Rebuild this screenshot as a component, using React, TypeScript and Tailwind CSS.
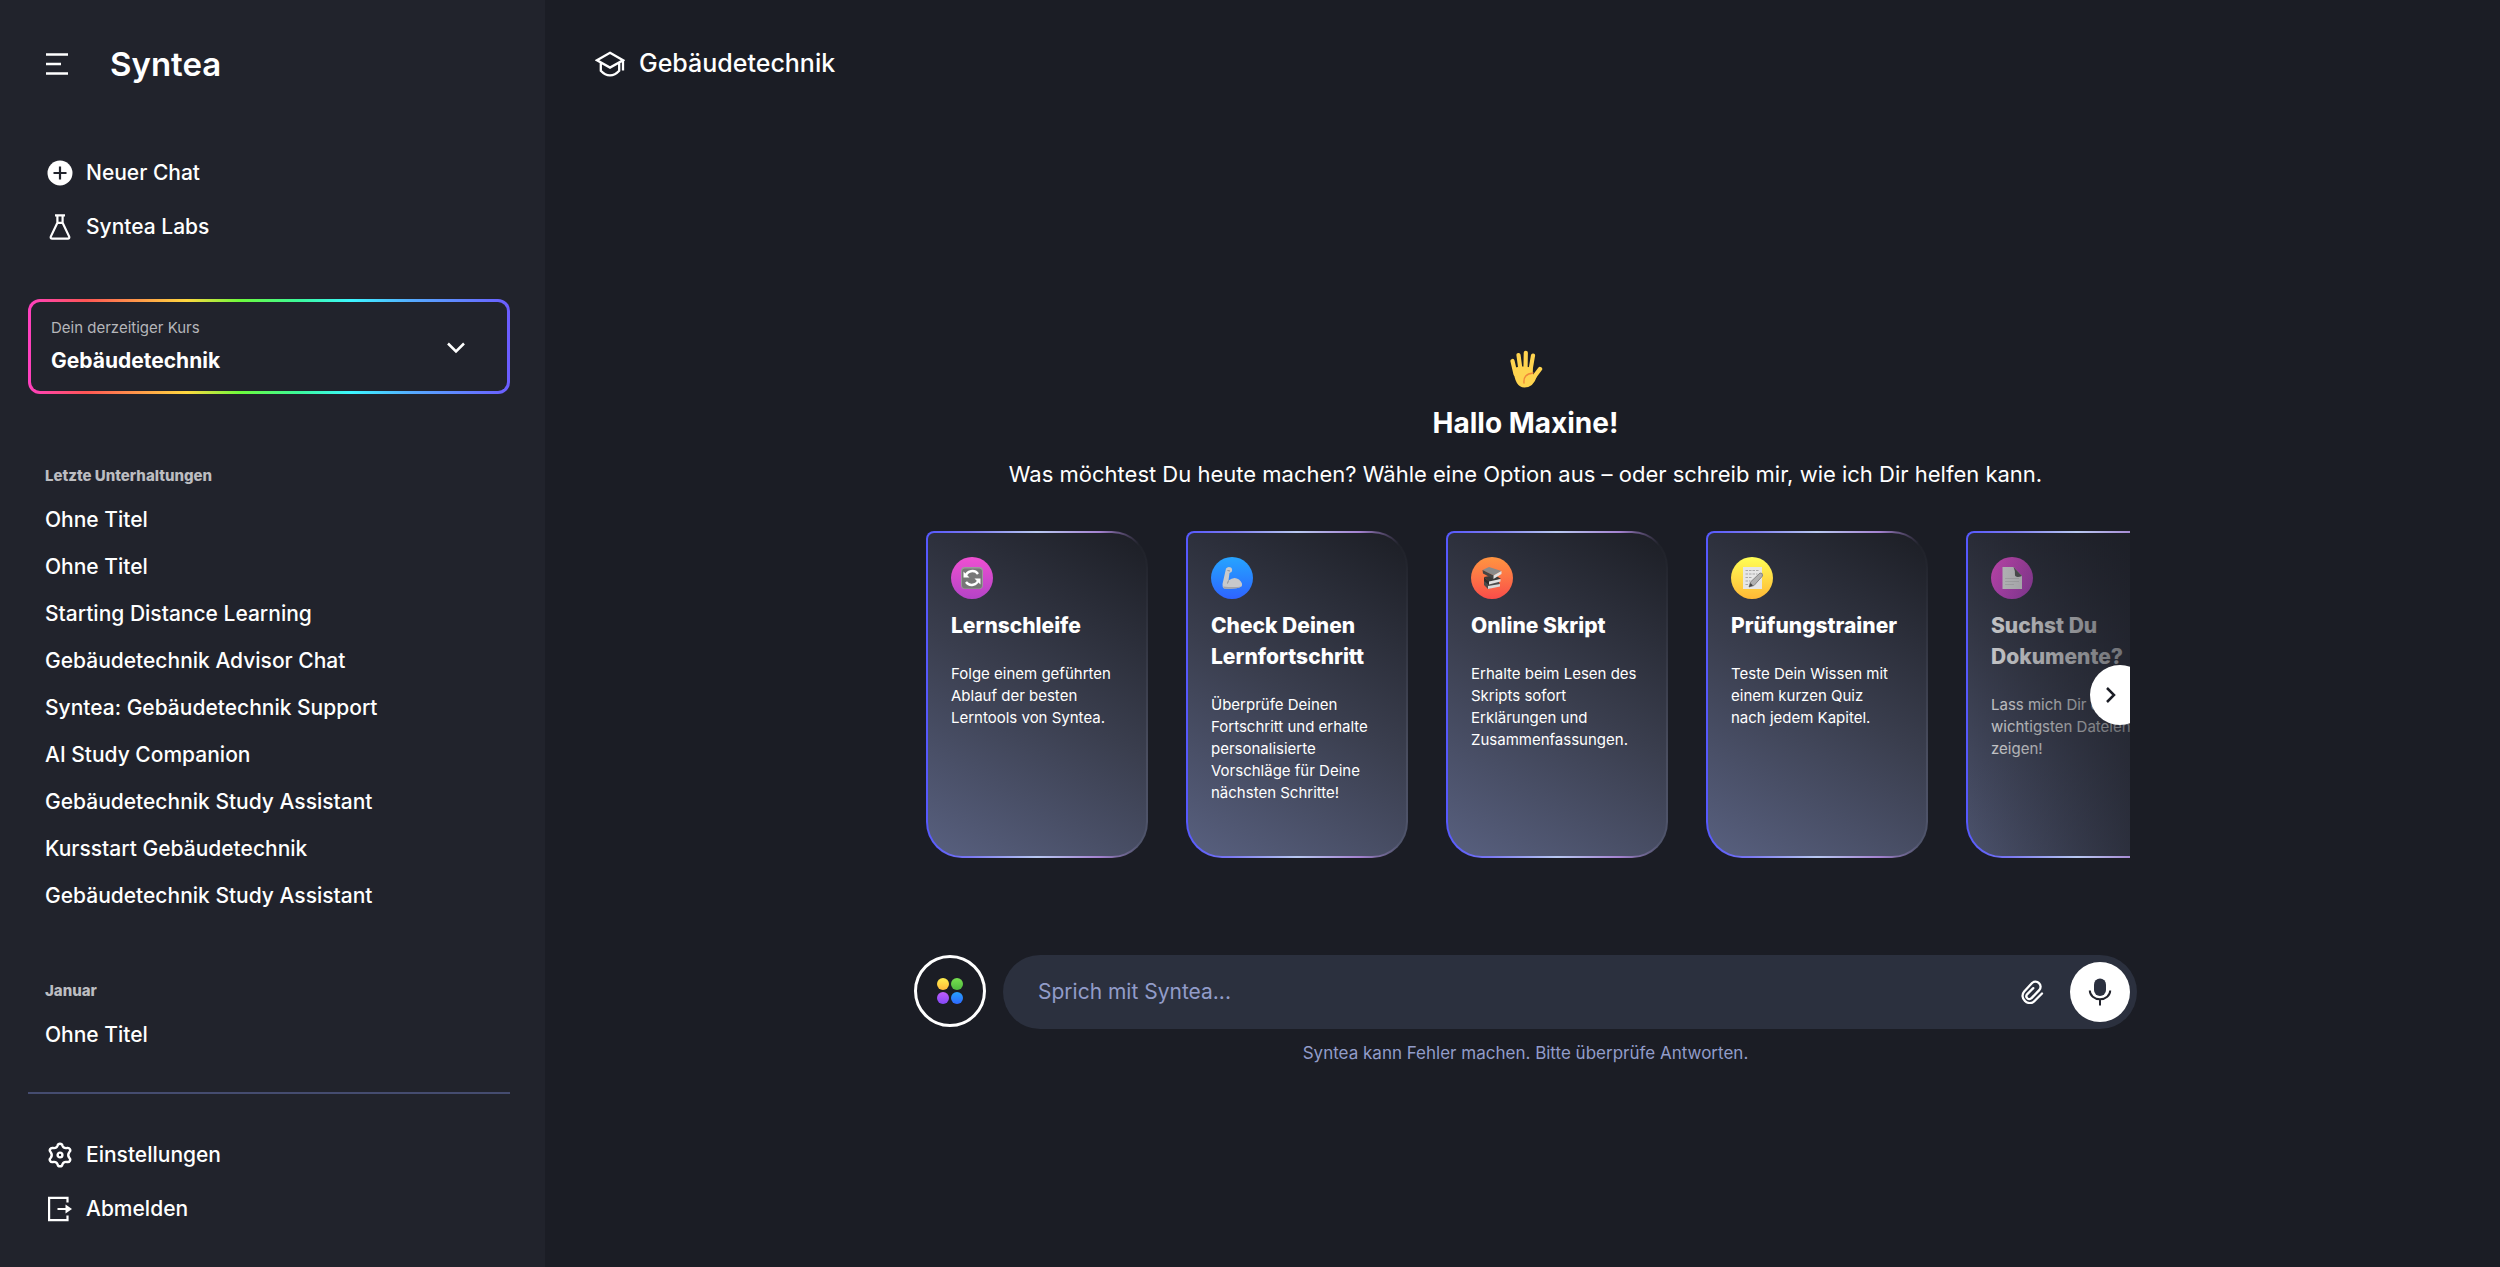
import { useState } from "react";
import type { ReactNode } from "react";

interface Action {
    title: string;
    text: string;
    badge: string;
    icon: ReactNode;
    faded?: boolean;
}

const recentChats = [
    "Ohne Titel",
    "Ohne Titel",
    "Starting Distance Learning",
    "Gebäudetechnik Advisor Chat",
    "Syntea: Gebäudetechnik Support",
    "AI Study Companion",
    "Gebäudetechnik Study Assistant",
    "Kursstart Gebäudetechnik",
    "Gebäudetechnik Study Assistant",
];

const januaryChats = ["Ohne Titel"];

const PlusIcon = () => (
    <svg viewBox="0 0 26 26" className="w-[26px] h-[26px]" fill="none">
        <circle cx="13" cy="13" r="12.5" fill="#fff" />
        <path d="M13 6.5v13M6.5 13h13" stroke="#21232c" strokeWidth="2.2" />
    </svg>
);

const FlaskIcon = () => (
    <svg viewBox="0 0 26 26" className="w-[26px] h-[26px]" fill="none" stroke="#fff" strokeWidth="2.2">
        <path d="M8 1.4h10M10.4 1.4v7.4L3.8 22.6q-.6 2 1.4 2h15.6q2 0 1.4-2L15.6 8.8V1.4M10 8.8h6" strokeLinejoin="round" />
    </svg>
);

const GearIcon = () => (
    <svg viewBox="0 0 26 26" className="w-[26px] h-[26px]" fill="none" stroke="#fff" strokeWidth="2.4" strokeLinejoin="round">
        <path d="M10.6 3.6Q11 1.7 13 1.7T15.4 3.6Q16.6 6.6 19.9 6Q21.9 5.5 22.9 7.2T22.3 10.1Q20.2 13 22.3 15.9Q23.8 17.2 22.9 18.8T19.9 20Q16.6 19.4 15.4 22.4Q15 24.3 13 24.3T10.6 22.4Q9.4 19.4 6.1 20Q4.1 20.5 3.1 18.8T3.7 15.9Q5.8 13 3.7 10.1Q2.2 8.8 3.1 7.2T6.1 6Q9.4 6.6 10.6 3.6Z" />
        <circle cx="13" cy="13" r="2.4" />
    </svg>
);

const LogoutIcon = () => (
    <svg viewBox="0 0 26 26" className="w-[26px] h-[26px]" fill="none" stroke="#fff" strokeWidth="2.2">
        <path d="M20.5 6.5V1.8H2.1v22.4h18.4v-4.7M10.5 13H20" />
        <path d="M18.5 8.5L25 13l-6.5 4.5z" fill="#fff" stroke="none" />
    </svg>
);

const CapIcon = () => (
    <svg viewBox="0 0 30 26" className="w-[30px] h-[26px]" fill="none" stroke="#fff" strokeWidth="2.3">
        <path d="M15 1.8L28 9.2L15 16.6L2 9.2ZM28 9v10.5M5.8 11.5v8.2Q10 24.3 15 24.3t9.2-4.6v-8.2" />
    </svg>
);

const HandIcon = () => (
    <svg viewBox="0 0 34 38" className="w-[34px] h-[38px]" fill="none" stroke="#ffd44f" strokeLinecap="round">
        <path d="M3.5 11L6.5 24M9.5 5L11.5 20M16.8 2.8L16.5 20M24 5.5L21.5 20" strokeWidth="4.2" />
        <path d="M31 19L25 27" strokeWidth="4.4" />
        <path d="M4.4 18Q13 15 23.6 18L24 24.5L28 26Q24.5 37.5 15.5 37.5Q5.5 37.5 4.4 18Z" fill="#ffd44f" stroke="none" />
        <path d="M24 23Q14 24 15 33" stroke="#f0893a" strokeWidth="1.4" />
    </svg>
);

const LoopIcon = () => (
    <svg viewBox="0 0 24 24" className="w-6 h-6" fill="none">
        <rect x="1" y="1" width="22" height="22" rx="4" fill="#9a9a9a" />
        <rect x="2" y="2.5" width="20" height="20" rx="3" fill="#777" />
        <path d="M5.5 10.5a7 7 0 0 1 12.5-2.5M18.5 13.5a7 7 0 0 1-12.5 2.5" stroke="#fff" strokeWidth="2.4" />
        <path d="M3.5 5.5v6h6zM20.5 18.5v-6h-6z" fill="#fff" />
    </svg>
);

const ArmIcon = () => (
    <svg viewBox="0 0 24 24" className="w-6 h-6" fill="none">
        <path d="M6 2.5Q8 0 11 1.5Q13 3.5 11.5 6L9.5 7L8.5 14.5Q14 10 19 13.5Q23.5 17.5 21.5 20.5Q16 23.5 4 22.5Q2.2 21.5 2.5 18Z" fill="#c9c9cb" />
        <path d="M8.5 14.5L7.5 17.5M7.5 4.5l2.5.5" stroke="#8e8e92" />
        <path d="M4 22.5Q16 23.5 21.5 20.5Q14 21.5 3 20.5Z" fill="#a4a4a8" />
    </svg>
);

const BooksIcon = () => (
    <svg viewBox="0 0 24 24" className="w-6 h-6" fill="none">
        <path d="M4 15l14-2 2 6-12 4L4 19z" fill="#4a4a4a" />
        <path d="M8 20l12-2v2.5L8 23z" fill="#d8d8d8" />
        <path d="M4 11l11-2 6 4-12 2.5z" fill="#393939" />
        <path d="M4 11l5 4.5v3.5l-5-4z" fill="#2c2c2c" />
        <path d="M9 15.5l11.5-2.5v2.5L9 18.5z" fill="#e0e0e0" />
        <path d="M2.5 4L9 1l12.5 4-8 4.5z" fill="#8a8a8a" />
        <path d="M2.5 4l11 5.5v3.5L3 7.5z" fill="#444" />
        <path d="M13.5 9.5l8-4.5v3l-8 5z" fill="#e2e2e2" />
    </svg>
);

const MemoIcon = () => (
    <svg viewBox="0 0 24 24" className="w-6 h-6" fill="none">
        <path d="M3 1h19v22H3z" fill="#e6e6e6" />
        <path d="M5.5 4.5h14M5.5 8h12M5.5 11.5h7M5.5 15h5M5.5 18.5h3" stroke="#a9a9a9" strokeDasharray="2.5 1" />
        <path d="M9 21l1.5-5L20 7q3-.5 2.5 3L14 19.5z" fill="#b0b0b0" stroke="#858585" />
        <path d="M9 21l1.5-4 2.5 2.5z" fill="#444" />
    </svg>
);

const PageIcon = () => (
    <svg viewBox="0 0 24 24" className="w-6 h-6" fill="none">
        <path d="M2.5 1h11L22 10v13H2.5z" fill="#ededed" />
        <path d="M13.5 1L22 10q-6 2-7-.5Q15.5 5 13.5 1z" fill="#5c5c5c" />
        <path d="M5 12.5h14M5 15.5h14M5 18.5h9" stroke="#d6d6d6" />
    </svg>
);

const ClipIcon = () => (
    <svg viewBox="0 0 24 24" className="w-6 h-6" fill="none" stroke="#fff" strokeWidth="2.3" strokeLinecap="round">
        <path d="M22 13.5l-7.2 7.2a6.6 6.6 0 0 1-9.8.3a6.6 6.6 0 0 1-.8-9.5l7.6-8.2a4.9 4.9 0 0 1 7.2-.2a4.9 4.9 0 0 1 .2 7l-7.7 8a2.9 2.9 0 0 1-4.2.1a2.9 2.9 0 0 1 0-4.1l6-6" />
    </svg>
);

const MicIcon = () => (
    <svg viewBox="0 0 24 28" className="w-6 h-7" fill="none" stroke="#21232c" strokeWidth="2">
        <rect x="6" y=".5" width="12" height="17.5" rx="6" fill="#2b303f" stroke="none" />
        <path d="M1.8 12.5a10.2 8.8 0 0 0 20.4 0M12 21v6.5" />
    </svg>
);

const actions: Action[] = [
    {
        title: "Lernschleife",
        text: "Folge einem geführten Ablauf der besten Lerntools von Syntea.",
        badge: "bg-linear-to-b from-[#f04fd2] to-[#b443c6]",
        icon: <LoopIcon />,
    },
    {
        title: "Check Deinen Lernfortschritt",
        text: "Überprüfe Deinen Fortschritt und erhalte personalisierte Vorschläge für Deine nächsten Schritte!",
        badge: "bg-linear-to-b from-[#27a4ff] to-[#2f62ff]",
        icon: <ArmIcon />,
    },
    {
        title: "Online Skript",
        text: "Erhalte beim Lesen des Skripts sofort Erklärungen und Zusammenfassungen.",
        badge: "bg-linear-to-b from-[#ff9440] to-[#f94b49]",
        icon: <BooksIcon />,
    },
    {
        title: "Prüfungstrainer",
        text: "Teste Dein Wissen mit einem kurzen Quiz nach jedem Kapitel.",
        badge: "bg-linear-to-b from-[#ffff55] to-[#ffb836]",
        icon: <MemoIcon />,
    },
    {
        title: "Suchst Du Dokumente?",
        text: "Lass mich Dir die wichtigsten Dateien zeigen!",
        badge: "bg-linear-to-br from-[#f04fd2] to-[#b443c6]",
        icon: <PageIcon />,
        faded: true,
    },
];

const NavButton = ({ icon, label }: { icon: ReactNode; label: string }) => (
    <button className="flex items-center gap-[13px] h-[54px] pl-[19px] text-[21px] font-medium text-left">
        {icon}
        {label}
    </button>
);

const ChatList = ({ title, chats }: { title: string; chats: string[] }) => (
    <section className="pl-[17px]">
        <h2 className="text-[15px] leading-6 font-extrabold text-[#bcbdc1]">{title}</h2>
        <ul className="mt-2">
            {chats.map((chat, index) => (
                <li key={index}>
                    <a href="#" className="block truncate text-[21px] leading-[47px] font-medium">
                        {chat}
                    </a>
                </li>
            ))}
        </ul>
    </section>
);

const Sidebar = () => (
    <aside className="flex flex-col w-[545px] shrink-0 px-7 bg-[#21232c]">
        <div className="flex items-center h-32 pl-[18px] gap-[42px]">
            <button aria-label="Menü">
                <svg viewBox="0 0 22 22" className="w-[22px] h-[22px]" fill="none" stroke="#fff" strokeWidth="2.4">
                    <path d="M0 1.5h22M0 11h15M0 20.5h22" />
                </svg>
            </button>
            <span className="text-[33px] leading-none font-semibold">Syntea</span>
        </div>

        <nav className="flex flex-col mt-[18px]">
            <NavButton icon={<PlusIcon />} label="Neuer Chat" />
            <NavButton icon={<FlaskIcon />} label="Syntea Labs" />
        </nav>

        <div className="relative flex flex-col mt-[45px] mr-[7px] h-[95px] border-[3px] border-transparent rounded-xl [background:linear-gradient(#21232c,#21232c)_padding-box,linear-gradient(90deg,#ff40c0,#ff5555_12%,#ffd83f_33%,#6dfb3c_44%,#3cf99a_56%,#3cf6ff_67%,#56a9ff_80%,#6b5cff)_border-box]">
            <label htmlFor="course" className="pt-[14px] pl-5 text-[15px] leading-6 text-[#b5b6ba]">
                Dein derzeitiger Kurs
            </label>
            <select
                id="course"
                className="w-full pl-5 text-[21px] leading-[42px] font-bold bg-transparent appearance-none outline-none"
            >
                <option>Gebäudetechnik</option>
            </select>
            <svg viewBox="0 0 18 12" className="absolute right-[42px] top-10 w-[18px] h-3 pointer-events-none" fill="none" stroke="#fff" strokeWidth="2.5">
                <path d="M1 1.5l8 8 8-8" />
            </svg>
        </div>

        <div className="flex flex-col mt-[70px] gap-[60px]">
            <ChatList title="Letzte Unterhaltungen" chats={recentChats} />
            <ChatList title="Januar" chats={januaryChats} />
        </div>

        <nav className="flex flex-col mt-[34px] mr-[7px] pt-[34px] border-t-2 border-[#454c70]">
            <NavButton icon={<GearIcon />} label="Einstellungen" />
            <NavButton icon={<LogoutIcon />} label="Abmelden" />
        </nav>
    </aside>
);

const ActionCard = ({ title, text, badge, icon, faded }: Action) => (
    <button className="relative flex flex-col items-start w-[222px] min-h-[327px] shrink-0 pl-[23px] pt-6 text-left border-2 border-transparent rounded-[36px] rounded-tl-lg [background:linear-gradient(30deg,#58607f,#3a3e4e_50%,#1c1e25)_padding-box,linear-gradient(90deg,#5558ff,#7a78f0_20%,#b9c9f2_50%,#a482d0_78%,transparent_96%)_border-box,linear-gradient(30deg,#58607f,#4a4e60_50%,#1c1e25)_border-box]">
        <span className={`flex items-center justify-center w-[42px] h-[42px] rounded-full ${badge}`}>
            {icon}
        </span>
        <span className="mt-[11px] text-[21px] leading-[31px] font-extrabold">{title}</span>
        <span className="mt-[22px] pr-[26px] text-[15px] leading-[22px]">{text}</span>
        {faded && (
            <span className="absolute inset-0 rounded-[34px] rounded-tl-md bg-linear-to-r from-[#1b1d25]/20 to-[#1b1d25]/80" />
        )}
    </button>
);

const ChatInput = () => {
    const [message, setMessage] = useState("");

    return (
        <form className="flex items-start gap-[17px] mt-[97px]">
            <button
                type="button"
                aria-label="Optionen"
                className="flex items-center justify-center w-[72px] h-[72px] shrink-0 border-[3px] border-white rounded-full"
            >
                <span className="grid grid-cols-2 gap-[2px]">
                    <span className="w-3 h-3 rounded-full bg-linear-to-b from-[#fff04f] to-[#ffb93a]" />
                    <span className="w-3 h-3 rounded-full bg-linear-to-b from-[#77e04f] to-[#4fb83f]" />
                    <span className="w-3 h-3 rounded-full bg-linear-to-b from-[#c05cff] to-[#8347f5]" />
                    <span className="w-3 h-3 rounded-full bg-linear-to-b from-[#27a0ff] to-[#2f67ff]" />
                </span>
            </button>
            <div className="flex items-center flex-1 h-[74px] pl-[35px] pr-[7px] rounded-full bg-[#2b303e]">
                <input
                    type="text"
                    aria-label="Nachricht"
                    placeholder="Sprich mit Syntea..."
                    value={message}
                    onChange={(e) => setMessage(e.target.value)}
                    className="flex-1 min-w-0 text-[21px] bg-transparent outline-none placeholder:text-[#929cc9]"
                />
                <button type="button" aria-label="Datei anhängen" className="mr-[26px]">
                    <ClipIcon />
                </button>
                <button
                    type="button"
                    aria-label="Spracheingabe"
                    className="flex items-center justify-center w-[60px] h-[60px] bg-white rounded-full"
                >
                    <MicIcon />
                </button>
            </div>
        </form>
    );
};

const App = () => {
    return (
        <div className="flex min-h-screen font-['Inter',sans-serif] text-white bg-[#1b1d25]">
            <Sidebar />
            <div className="flex flex-col flex-1 min-w-0">
                <header className="flex items-center gap-[14px] h-[127px] pl-[50px]">
                    <CapIcon />
                    <span className="text-[25px] font-medium">Gebäudetechnik</span>
                </header>

                <main className="w-full max-w-[1229px] mx-auto pl-[6px] pt-[223px]">
                    <div className="flex flex-col items-center text-center">
                        <HandIcon />
                        <h1 className="mt-[17px] text-[28px] leading-9 font-bold">Hallo Maxine!</h1>
                        <p className="mt-[17px] text-[22px] leading-8">
                            Was möchtest Du heute machen? Wähle eine Option aus – oder schreib mir, wie ich Dir helfen kann.
                        </p>
                    </div>

                    <div className="relative flex gap-[38px] mt-[41px] ml-3 mr-[7px] overflow-hidden">
                        {actions.map((action) => (
                            <ActionCard key={action.title} {...action} />
                        ))}
                        <button
                            aria-label="Weiter"
                            className="absolute top-[134px] right-[-20px] flex items-center w-[60px] h-[60px] pl-4 bg-white rounded-full"
                        >
                            <svg viewBox="0 0 10 16" className="w-[10px] h-4" fill="none" stroke="#1b1d25" strokeWidth="2.5">
                                <path d="M1 1l7 7-7 7" />
                            </svg>
                        </button>
                    </div>

                    <ChatInput />
                    <p className="mt-3 text-[17px] leading-6 text-center text-[#929cc9]">
                        Syntea kann Fehler machen. Bitte überprüfe Antworten.
                    </p>
                </main>
            </div>
        </div>
    );
};

export default App;
